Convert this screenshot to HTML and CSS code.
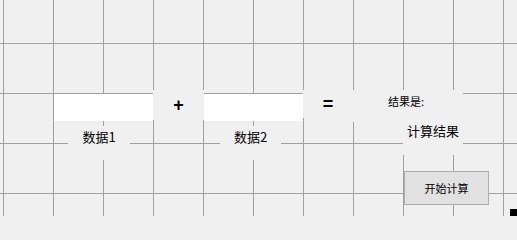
FILE: index.html
```html
<!DOCTYPE html>
<html lang="zh">
<head>
<meta charset="utf-8">
<title>计算器</title>
<link rel="stylesheet" href="styles.css">
</head>
<body>
<div class="form">
  <div class="row row-inputs">
    <div class="textbox tb1"></div>
    <div class="op op-plus">+</div>
    <div class="textbox tb2"></div>
    <div class="op op-eq">=</div>
    <div class="lbl-result-title">结果是:</div>
  </div>
  <div class="row row-captions">
    <div class="caption cap1">数据1</div>
    <div class="caption cap2">数据2</div>
    <div class="caption cap-result">计算结果</div>
  </div>
  <div class="row row-actions">
    <button class="btn" type="button">开始计算</button>
  </div>
  <div class="handle"></div>
</div>
</body>
</html>
```
FILE: styles.css
```css
html, body {
  margin: 0;
  padding: 0;
  background: #f0f0f0;
}

.form {
  position: relative;
  width: 517px;
  height: 216px;
  box-sizing: border-box;
  padding-top: 90px;
  overflow: hidden;
  background-color: #f0f0f0;
  background-image:
    linear-gradient(to right, #a0a0a0 1px, transparent 1px),
    linear-gradient(to bottom, #a0a0a0 1px, transparent 1px);
  background-size: 50px 50px;
  background-position: 3px 43px;
  font-family: "Noto Sans CJK SC", "Noto Sans", sans-serif;
  color: #000;
}

.row {
  display: flex;
  align-items: flex-start;
}

.row-inputs {
  height: 31px;
  padding-left: 54px;
}

.textbox {
  width: 99px;
  height: 27px;
  margin-top: 4px;
  background: #fff;
  flex: none;
}

.op {
  flex: none;
  height: 30px;
  display: flex;
  align-items: center;
  justify-content: center;
  background: #f0f0f0;
  font-family: "Liberation Sans", Arial, sans-serif;
  font-weight: bold;
  font-size: 18px;
  line-height: 1;
}

.op-plus {
  width: 51px;
}

.op-eq {
  width: 50px;
  height: 28px;
}

.lbl-result-title {
  flex: none;
  width: 75px;
  height: 28px;
  padding-left: 35px;
  padding-top: 4px;
  box-sizing: content-box;
  background: #f0f0f0;
  font-size: 11px;
  line-height: 14px;
  white-space: nowrap;
}

.row-captions {
  height: 39px;
}

.caption {
  flex: none;
  height: 32px;
  padding-top: 2px;
  line-height: 18px;
  font-size: 13px;
  text-align: center;
  background: #f0f0f0;
  white-space: nowrap;
}

.cap1 {
  width: 62px;
  margin-left: 68px;
  margin-top: 5px;
}

.cap2 {
  width: 61px;
  margin-left: 90px;
  margin-top: 5px;
}

.cap-result {
  width: 60px;
  height: 33px;
  padding-top: 4px;
  margin-left: 122px;
  margin-top: -3px;
}

.row-actions {
  padding-top: 11px;
  padding-left: 404px;
}

.btn {
  width: 85px;
  height: 34px;
  margin: 0;
  padding: 0;
  border: 1px solid #adadad;
  background: #e1e1e1;
  font-family: "Noto Sans CJK SC", "Noto Sans", sans-serif;
  font-size: 11px;
  color: #000;
  cursor: default;
}

.handle {
  position: absolute;
  left: 510px;
  top: 209px;
  width: 8px;
  height: 8px;
  background: #000;
}
```
